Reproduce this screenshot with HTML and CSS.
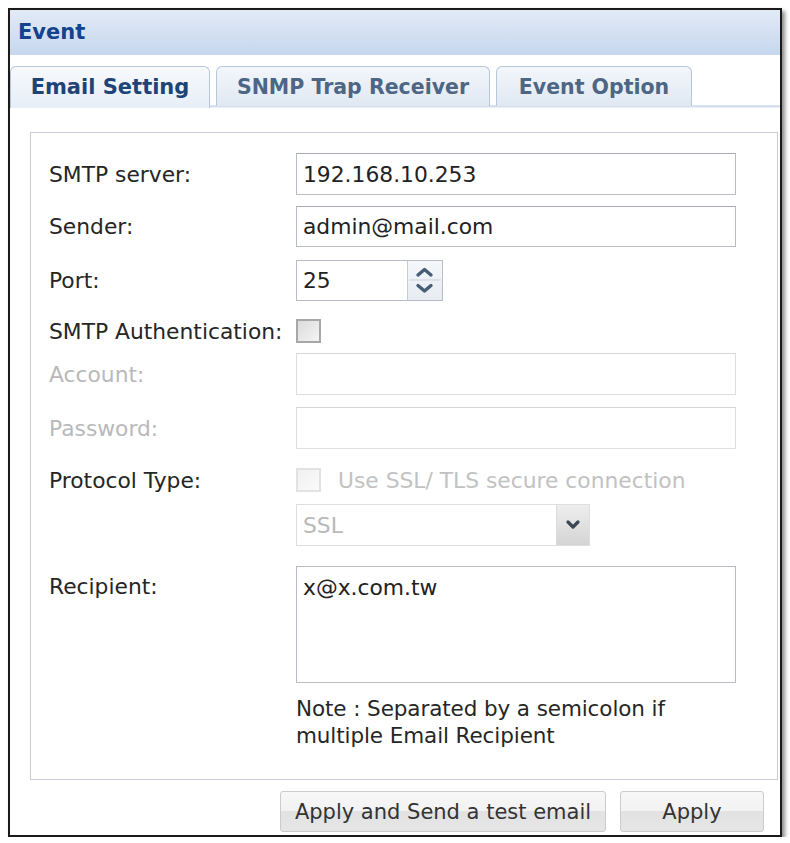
FILE: index.html
```html
<!DOCTYPE html>
<html lang="en">
<head>
    <meta charset="UTF-8">
    <meta name="viewport" content="width=device-width, initial-scale=1.0">
    <title>Event</title>
    <link rel="stylesheet" href="styles.css">
</head>
<body>
    <div class="panel">
        <header class="panel-header">Event</header>

        <div class="tab-strip">
            <div class="tab tab-active tab-email">Email Setting</div>
            <div class="tab tab-snmp">SNMP Trap Receiver</div>
            <div class="tab tab-option">Event Option</div>
        </div>

        <div class="panel-body">
            <div class="fieldset">
                <div class="row row-smtp">
                    <label class="field-label">SMTP server:</label>
                    <div class="text-field">192.168.10.253</div>
                </div>
                <div class="row row-sender">
                    <label class="field-label">Sender:</label>
                    <div class="text-field">admin@mail.com</div>
                </div>
                <div class="row row-port">
                    <label class="field-label">Port:</label>
                    <div class="spinner">
                        <div class="spinner-value">25</div>
                        <div class="spinner-buttons">
                            <svg width="33" height="38" viewBox="0 0 33 38">
                                <line x1="1" y1="19" x2="33" y2="19" stroke="#c9d3df" stroke-width="1"/>
                                <path d="M10 14 L16.5 8.5 L23 14" fill="none" stroke="#465d78" stroke-width="3.4" stroke-linecap="round" stroke-linejoin="round"/>
                                <path d="M10 24.5 L16.5 30 L23 24.5" fill="none" stroke="#465d78" stroke-width="3.4" stroke-linecap="round" stroke-linejoin="round"/>
                            </svg>
                        </div>
                    </div>
                </div>
                <div class="row row-auth">
                    <label class="field-label">SMTP Authentication:</label>
                    <span class="checkbox"></span>
                </div>
                <div class="row row-account">
                    <label class="field-label disabled">Account:</label>
                    <div class="text-field disabled-field"></div>
                </div>
                <div class="row row-password">
                    <label class="field-label disabled">Password:</label>
                    <div class="text-field disabled-field"></div>
                </div>
                <div class="row row-protocol">
                    <label class="field-label">Protocol Type:</label>
                    <span class="checkbox checkbox-disabled"></span>
                    <span class="check-text">Use SSL/ TLS secure connection</span>
                </div>
                <div class="row row-select">
                    <span class="field-label"></span>
                    <div class="select disabled-field">
                        <span class="select-value">SSL</span>
                        <span class="select-trigger">
                            <svg width="16" height="12" viewBox="0 0 16 12">
                                <path d="M3 3 L8 8 L13 3" fill="none" stroke="#3c4654" stroke-width="3.2" stroke-linecap="round" stroke-linejoin="round"/>
                            </svg>
                        </span>
                    </div>
                </div>
                <div class="row row-recipient">
                    <label class="field-label">Recipient:</label>
                    <div class="text-area">x@x.com.tw</div>
                </div>
                <div class="row row-note">
                    <span class="field-label"></span>
                    <p class="note">Note : Separated by a semicolon if<br>multiple Email Recipient</p>
                </div>
            </div>

            <div class="button-bar">
                <button class="btn btn-test">Apply and Send a test email</button>
                <button class="btn btn-apply">Apply</button>
            </div>
        </div>
    </div>
</body>
</html>
```

FILE: styles.css
```css
* {
    margin: 0;
    padding: 0;
    box-sizing: border-box;
}

body {
    font-family: "DejaVu Sans", Verdana, sans-serif;
    background-color: #ffffff;
    color: #222222;
}

.panel {
    margin: 8px 0 0 8px;
    width: 774px;
    height: 829px;
    border: 2px solid #1a1a1a;
    background-color: #ffffff;
    box-shadow: 3px 3px 4px rgba(0, 0, 0, 0.45);
    display: flex;
    flex-direction: column;
}

.panel-header {
    height: 45px;
    padding: 0 0 0 8px;
    background: linear-gradient(#e2eaf6, #c6d7ee);
    color: #15428b;
    font-size: 21px;
    font-weight: bold;
    line-height: 44px;
}

.tab-strip {
    height: 53px;
    padding: 11px 0 0 0;
    display: flex;
    gap: 6px;
    background: linear-gradient(#ffffff 0, #ffffff 50px, #d6e0ec 50px, #d6e0ec 52px, #f4f7fb 52px);
    border-bottom: 1px solid #e8eef5;
}

.tab {
    height: 40px;
    border: 1px solid #b7c6d8;
    border-bottom: none;
    border-radius: 6px 6px 0 0;
    background: linear-gradient(#f3f6fb, #dfe8f3);
    color: #4d6683;
    font-size: 20.5px;
    font-weight: bold;
    line-height: 40px;
    text-align: center;
}

.tab-active {
    height: 42px;
    background: linear-gradient(#f7f9fc, #e6eef8);
    color: #1d4476;
    font-size: 21px;
}

.tab-email {
    width: 200px;
}

.tab-snmp {
    width: 274px;
}

.tab-option {
    width: 196px;
}

.panel-body {
    flex-grow: 1;
    padding: 24px 2px 0 20px;
}

.fieldset {
    height: 648px;
    border: 1px solid #c9ced6;
    padding: 20px 0 0 18px;
}

.row {
    display: flex;
    align-items: center;
    font-size: 21.8px;
}

.field-label {
    flex: 0 0 247px;
    color: #262626;
}

.field-label.disabled {
    color: #b9b9b9;
}

.text-field {
    width: 440px;
    height: 100%;
    border: 1px solid #b9bcc4;
    border-top-color: #a9acb4;
    padding: 0 6px;
    display: flex;
    align-items: center;
    color: #222222;
}

.disabled-field {
    border-color: #dedede;
    border-top-color: #d6d6d6;
}

.row-smtp {
    height: 42px;
    margin-bottom: 11px;
}

.row-sender {
    height: 41px;
    margin-bottom: 13px;
}

.row-port {
    height: 41px;
    margin-bottom: 10px;
}

.spinner {
    height: 100%;
    display: flex;
    border: 1px solid #b9bcc4;
}

.spinner-value {
    width: 111px;
    padding: 0 6px;
    display: flex;
    align-items: center;
    border-right: 1px solid #c6cbd3;
}

.spinner-buttons {
    width: 34px;
    background: linear-gradient(#f5f7fa, #e7ecf2);
    display: flex;
}

.row-auth {
    height: 40px;
    margin-bottom: 2px;
}

.checkbox {
    width: 25px;
    height: 24px;
    border: 2px solid #a7a7a7;
    background: linear-gradient(135deg, #dcdcdc, #f4f4f4);
}

.checkbox-disabled {
    border-color: #e2e2e2;
    background: linear-gradient(135deg, #f0f0f0, #fbfbfb);
}

.row-account {
    height: 42px;
    margin-bottom: 12px;
}

.row-password {
    height: 42px;
    margin-bottom: 12px;
}

.row-protocol {
    height: 38px;
    margin-bottom: 5px;
}

.check-text {
    margin-left: 17px;
    color: #c2c2c2;
}

.row-select {
    height: 42px;
    margin-bottom: 20px;
}

.select {
    width: 294px;
    height: 100%;
    border: 1px solid #dedede;
    display: flex;
}

.select-value {
    flex-grow: 1;
    padding: 0 6px;
    display: flex;
    align-items: center;
    color: #b9b9b9;
}

.select-trigger {
    width: 33px;
    background: linear-gradient(#eeeeee, #d4d4d4);
    border-left: 1px solid #dcdcdc;
    display: flex;
    align-items: center;
    justify-content: center;
}

.row-recipient {
    height: 117px;
    margin-bottom: 12px;
    align-items: flex-start;
}

.row-recipient .field-label {
    padding-top: 8px;
}

.text-area {
    width: 440px;
    height: 100%;
    border: 1px solid #b9bcc4;
    padding: 8px 6px;
}

.note {
    font-size: 21.5px;
    letter-spacing: -0.1px;
    line-height: 27px;
    color: #262626;
}

.button-bar {
    display: flex;
    justify-content: flex-end;
    gap: 14px;
    padding: 11px 14px 0 0;
}

.btn {
    height: 41px;
    border: 1px solid #cbcbcb;
    border-radius: 3px;
    background: linear-gradient(#f7f7f7 0, #f2f2f2 50%, #e2e2e2 50%, #e6e6e6 100%);
    color: #333333;
    font-family: "DejaVu Sans", Verdana, sans-serif;
    font-size: 21px;
}

.btn-test {
    width: 326px;
}

.btn-apply {
    width: 144px;
}
```
